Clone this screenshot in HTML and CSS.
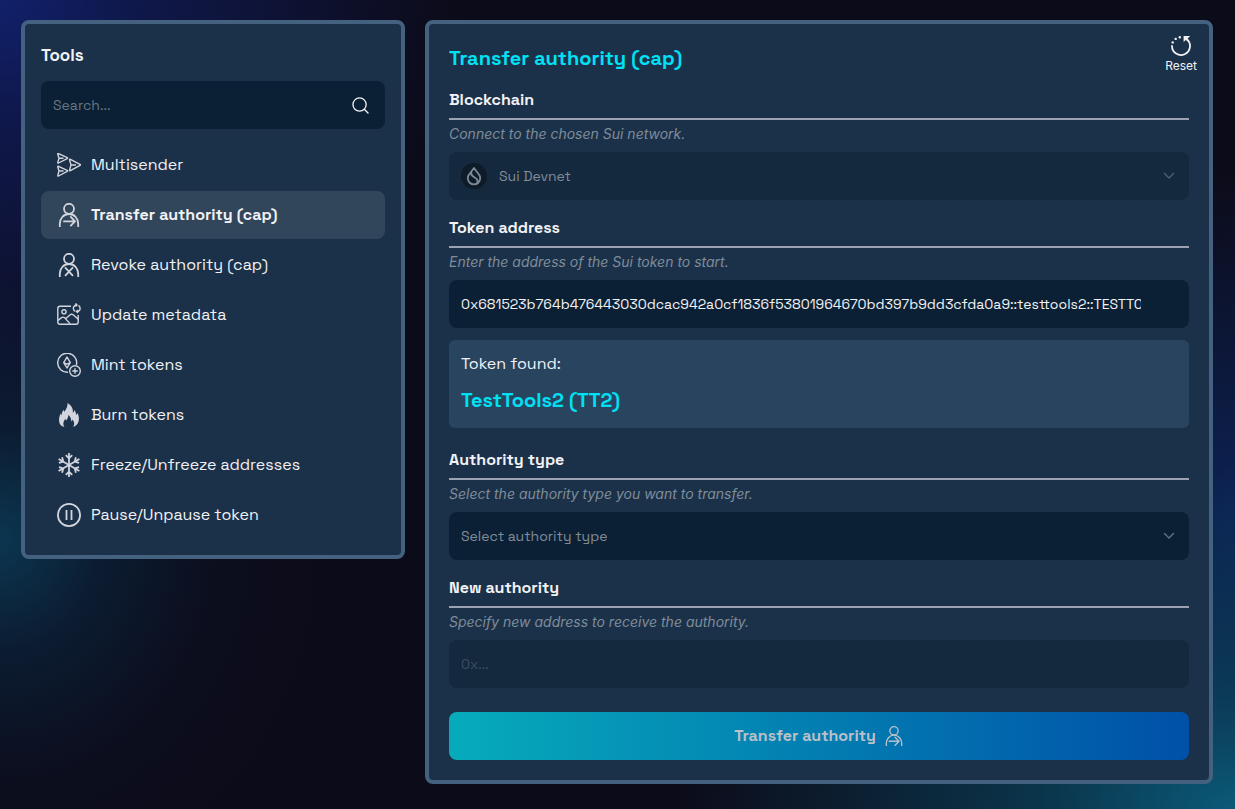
FILE: index.html
```html
<!DOCTYPE html>
<html lang="en">
<head>
<meta charset="utf-8">
<meta name="viewport" content="width=device-width, initial-scale=1">
<title>Transfer authority (cap)</title>
<link rel="stylesheet" href="styles.css">
</head>
<body>
<svg class="sprite" aria-hidden="true">
  <symbol id="person-arrow" viewBox="0 0 24 24">
    <circle cx="12" cy="5.8" r="5"/>
    <path d="M2.800 24v-3.200c0-5 3.600-9.800 9.200-9.800s9.200 4.800 9.200 9.800V24M6.200 18.300h11M13.300 13.400l4.700 4.900-4.700 4.900"/>
  </symbol>
</svg>
<main class="layout">
  <aside class="panel tools">
    <h2 class="tools-title">Tools</h2>
    <div class="search">
      <input class="field" type="text" placeholder="Search..." aria-label="Search tools">
      <svg class="search-icon" viewBox="0 0 18 18" aria-hidden="true"><circle cx="8" cy="8" r="7"/><path d="M13 13l4 4"/></svg>
    </div>
    <nav class="menu" aria-label="Tools">
      <a class="menu-item" href="#multisender">
        <svg class="icon thin" viewBox="0 0 24 24" aria-hidden="true">
          <path d="M.8 1.200Q.5.200 1.500.600L10.200 4.600q.9.500 0 1L1.500 10Q.5 10.400.8 9.400L2 5.300zM2 5.300h4.500"/>
          <path d="M.8 14Q.5 13 1.500 13.400L10.200 17.400q.9.500 0 1L1.500 23Q.5 23.400.8 22.400L2 18zM2 18h4.500"/>
          <path d="M12.600 7Q12.300 5.900 13.400 6.400L23 11.400q.9.500 0 1L13.400 17.600Q12.300 18 12.600 17L14 12zM14 12h5"/>
        </svg>
        Multisender</a>
      <a class="menu-item active" href="#transfer" aria-current="page">
        <svg class="icon" aria-hidden="true"><use href="#person-arrow"/></svg>
        Transfer authority (cap)</a>
      <a class="menu-item" href="#revoke">
        <svg class="icon" viewBox="0 0 24 24" aria-hidden="true">
          <circle cx="12" cy="5.800" r="5"/>
          <path d="M2.800 24v-3.200c0-5 3.600-9.800 9.200-9.800s9.200 4.800 9.200 9.800V24M8 14.400l8 8.400M16 14.400l-8 8.400"/>
        </svg>
        Revoke authority (cap)</a>
      <a class="menu-item" href="#metadata">
        <svg class="icon thin" viewBox="0 0 24 24" aria-hidden="true">
          <path d="M14 3.300H3Q.8 3.300.8 5.500V19Q.8 21.200 3 21.200h16q2.200 0 2.200-2.200v-7"/>
          <circle cx="7" cy="8.800" r="2.100"/>
          <path d="M1 17.500l3.500-2.900q1.500-1 3 0l5.500 6M8.500 15.800l4.700-4q1.500-1.200 3 0l5 4.400"/>
          <path d="M18.300 8.300c-2.300-1-2.700-4.200-.6-5.700.6-.4 1.200-.6 2-.6M18.500.4L20 2l-1.500 1.600M21.500 2.400c2 1.200 2.200 4.400.2 5.700-.6.400-1.200.6-2 .5M21 7l-1.500 1.600L21 10.100"/>
        </svg>
        Update metadata</a>
      <a class="menu-item" href="#mint">
        <svg class="icon thin" viewBox="0 0 24 24" aria-hidden="true">
          <path d="M11 19.200A9.500 9.500 0 1 1 19.400 12"/>
          <path d="M10 4l3.300 5.700L10 15 6.700 9.700zM6.700 9.700L10 11.200l3.300-1.500"/>
          <circle cx="18" cy="18" r="5.300"/><path d="M18 15.300v5.400M15.300 18h5.400"/>
        </svg>
        Mint tokens</a>
      <a class="menu-item" href="#burn">
        <svg class="icon solid" viewBox="0 0 24 24" aria-hidden="true">
          <path d="M10.500 0c4 2.300 5.800 5.500 5.400 10 .8-.7 1.200-1.600 1.300-2.900 1.500 1.600 1.900 3.200 1.900 5 .8-.5 1.200-1.200 1.500-2 1.300 3 1.800 6.200.8 9-.8 2.300-2.400 4-5.200 4.900 1.800-3.200.8-5.700-1-7.400-.1 1-.3 1.600-.8 2.200-.2-3.300-1.300-5.700-3.200-6.700.3 2.600-.8 3.800-2 5.300-.5-.5-.8-1-.8-1.700-2.100 2.500-2.900 5.500-1 8.300-3-.8-4.800-2.500-5.200-5.300-.5-3 .3-5.700 1.300-8.200.2.700.5 1.300 1 1.800.1-2.200.8-4 2.200-5.600 0 .9.200 1.500.7 2C9.200 6 11 3.300 10.500 0z"/>
        </svg>
        Burn tokens</a>
      <a class="menu-item" href="#freeze">
        <svg class="icon" viewBox="0 0 24 24" aria-hidden="true">
          <g id="flake"><path d="M12 0v24M8.800 2.200L12 5.400l3.200-3.200M8.800 21.800l3.200-3.200 3.200 3.200"/></g>
          <use href="#flake" transform="rotate(60 12 12)"/><use href="#flake" transform="rotate(120 12 12)"/>
        </svg>
        Freeze/Unfreeze addresses</a>
      <a class="menu-item" href="#pause">
        <svg class="icon" viewBox="0 0 24 24" aria-hidden="true"><circle cx="12" cy="12" r="11.100"/><path d="M9.500 7v10M14.500 7v10"/></svg>
        Pause/Unpause token</a>
    </nav>
  </aside>

  <form class="panel form">
    <h1 class="title">Transfer authority (cap)</h1>
    <button class="reset" type="reset">
      <svg class="reset-icon" viewBox="0 0 20 20" aria-hidden="true">
        <path d="M1 10a9 9 0 1 0 15-6.700"/>
        <path class="fill" d="M12.600 0h6.600l-2.600 2.600 1 1.600-1.400 1-1.200-1.400-2.400 2.200z"/>
        <g class="fill"><circle cx="1.700" cy="6.400" r="1.200"/><circle cx="4.700" cy="2.900" r="1.200"/><circle cx="8.800" cy="1.200" r="1.200"/></g>
      </svg>
      Reset
    </button>

    <section class="group">
      <label class="label" for="chain">Blockchain</label>
      <p class="hint">Connect to the chosen Sui network.</p>
      <div class="select">
        <select class="field with-logo" id="chain" disabled><option>Sui Devnet</option></select>
        <svg class="logo" viewBox="0 0 26 26" aria-hidden="true">
          <circle class="disc" cx="13" cy="13" r="13"/>
          <path d="M13 5l4.700 6.200a6.200 6.200 0 1 1-9.400 0zM10.200 9.200c-.2 3.300 1.500 4.300 4.200 5.800 2.200 1.200 2.700 3 1.600 5.300"/>
        </svg>
        <svg class="chevron" viewBox="0 0 10 6" aria-hidden="true"><path d="M.5.500L5 5 9.500.500"/></svg>
      </div>
    </section>

    <section class="group">
      <label class="label" for="token">Token address</label>
      <p class="hint">Enter the address of the Sui token to start.</p>
      <input class="field" id="token" type="text" value="0x681523b764b476443030dcac942a0cf1836f53801964670bd397b9dd3cfda0a9::testtools2::TESTTOOLS2">
      <div class="found">
        <p class="found-label">Token found:</p>
        <p class="found-name">TestTools2 (TT2)</p>
      </div>
    </section>

    <section class="group">
      <label class="label" for="type">Authority type</label>
      <p class="hint">Select the authority type you want to transfer.</p>
      <div class="select">
        <select class="field" id="type"><option>Select authority type</option></select>
        <svg class="chevron" viewBox="0 0 10 6" aria-hidden="true"><path d="M.5.500L5 5 9.500.500"/></svg>
      </div>
    </section>

    <section class="group">
      <label class="label" for="new">New authority</label>
      <p class="hint">Specify new address to receive the authority.</p>
      <input class="field" id="new" type="text" placeholder="0x..." disabled>
    </section>

    <button class="submit" type="submit" disabled>
      Transfer authority
      <svg class="submit-icon" aria-hidden="true"><use href="#person-arrow"/></svg>
    </button>
  </form>
</main>
</body>
</html>
```
FILE: styles.css
```css
* { box-sizing: border-box; }

body {
  margin: 0;
  min-height: 100vh;
  color: #f2f2f6;
  font: 16px/24px "Space Grotesk", Inter, sans-serif;
  background:
    radial-gradient(ellipse 460px 420px at 0 0, #11206a 0%, #11206a99 30%, transparent 100%),
    radial-gradient(ellipse 340px 380px at 0 540px, #0b3650 0%, #0b2a4588 30%, #0c183033 65%, transparent 100%),
    radial-gradient(ellipse 560px 340px at 100% 100%, #0a5a78 0%, #0a506c99 35%, transparent 100%),
    radial-gradient(ellipse 240px 340px at 100% 510px, #0c2254 0%, transparent 100%),
    #0c0b19;
}

h1, h2, p { margin: 0; }
button, input, select { font: inherit; color: inherit; border: 0; margin: 0; }

svg { fill: none; stroke: currentColor; stroke-linecap: round; stroke-linejoin: round; flex: none; }
.sprite { position: absolute; width: 0; height: 0; }

.layout {
  display: grid;
  grid-template-columns: 384px minmax(0, 1fr);
  align-items: start;
  gap: 20px;
  padding: 20px 22px 20px 21px;
}

.panel {
  background: #1b3149;
  border: 4px solid #446280;
  border-radius: 8px;
}

.tools { padding: 16px; }
.tools-title { font-size: 17px; line-height: 30px; margin-bottom: 11px; }

.field {
  display: block;
  width: 100%;
  height: 48px;
  padding: 0 48px 0 12px;
  border-radius: 8px;
  background: #0b2034;
  font-size: 14px;
  appearance: none;
}
.field::placeholder { color: #667585; opacity: 1; }
.field:disabled { background: #14293d; opacity: 1; }
.field:disabled::placeholder { color: #3c4d5f; }

.search, .select { display: grid; align-items: center; }
.search > *, .select > * { grid-area: 1 / 1; }

.search { margin-bottom: 12px; }
.search-icon { width: 17px; height: 17px; justify-self: end; margin-right: 16px; stroke-width: 1.400; pointer-events: none; }

.menu { display: grid; gap: 2px; }
.menu-item {
  display: flex;
  align-items: center;
  gap: 10px;
  height: 48px;
  padding: 0 16px;
  border-radius: 8px;
  color: inherit;
  text-decoration: none;
}
.menu-item.active { background: #31465a; font-weight: 700; }

.icon { width: 24px; height: 24px; color: #d2d5dd; stroke-width: 1.800; stroke-linecap: butt; }
.icon.thin { stroke-width: 1.400; }
.icon.solid { fill: currentColor; stroke: none; }

.form { position: relative; padding: 20px; }
.title { font-size: 20px; line-height: 28px; color: #00e1f5; margin-bottom: 16px; }

.reset {
  position: absolute;
  top: 12px;
  right: 12px;
  display: grid;
  justify-items: center;
  gap: 2px;
  padding: 0;
  background: none;
  font: 12px/16px Inter, sans-serif;
}
.reset-icon { width: 20px; height: 20px; stroke-width: 1.800; }
.fill { fill: currentColor; stroke: none; }

.group { margin-bottom: 16px; }
.label {
  display: block;
  padding-bottom: 6px;
  border-bottom: 2px solid #9da2b2;
  font-weight: 700;
}
.hint {
  padding: 4px 0 8px;
  color: #7f8c99;
  font-family: Inter, sans-serif;
  font-size: 14px;
  font-style: oblique 14deg;
  line-height: 20px;
}

.field.with-logo { padding-left: 50px; }
.select .field { color: #818c99; }
.logo { width: 26px; height: 26px; margin-left: 12px; color: #7f8a96; stroke-width: 1.800; pointer-events: none; }
.disc { fill: #0e1b28; stroke: none; }
.chevron { width: 10px; height: 6px; justify-self: end; margin-right: 15px; color: #647488; stroke-width: 1.300; overflow: visible; pointer-events: none; }
.field:disabled ~ .chevron { color: #4f6173; }

.found {
  display: grid;
  gap: 12px;
  margin: 12px 0 20px;
  padding: 12px 12px 16px;
  border-radius: 6px;
  background: #29445f;
}
.found-name { font-size: 20px; line-height: 24px; font-weight: 700; color: #00e1f5; }

.submit {
  display: flex;
  align-items: center;
  justify-content: center;
  gap: 8px;
  width: 100%;
  height: 48px;
  margin-top: 24px;
  border-radius: 8px;
  background: linear-gradient(90deg, #06abbb, #0050a8);
  color: #bcc0c8;
  font-weight: 700;
}
.submit-icon { width: 20px; height: 20px; stroke-width: 1.600; }
```
